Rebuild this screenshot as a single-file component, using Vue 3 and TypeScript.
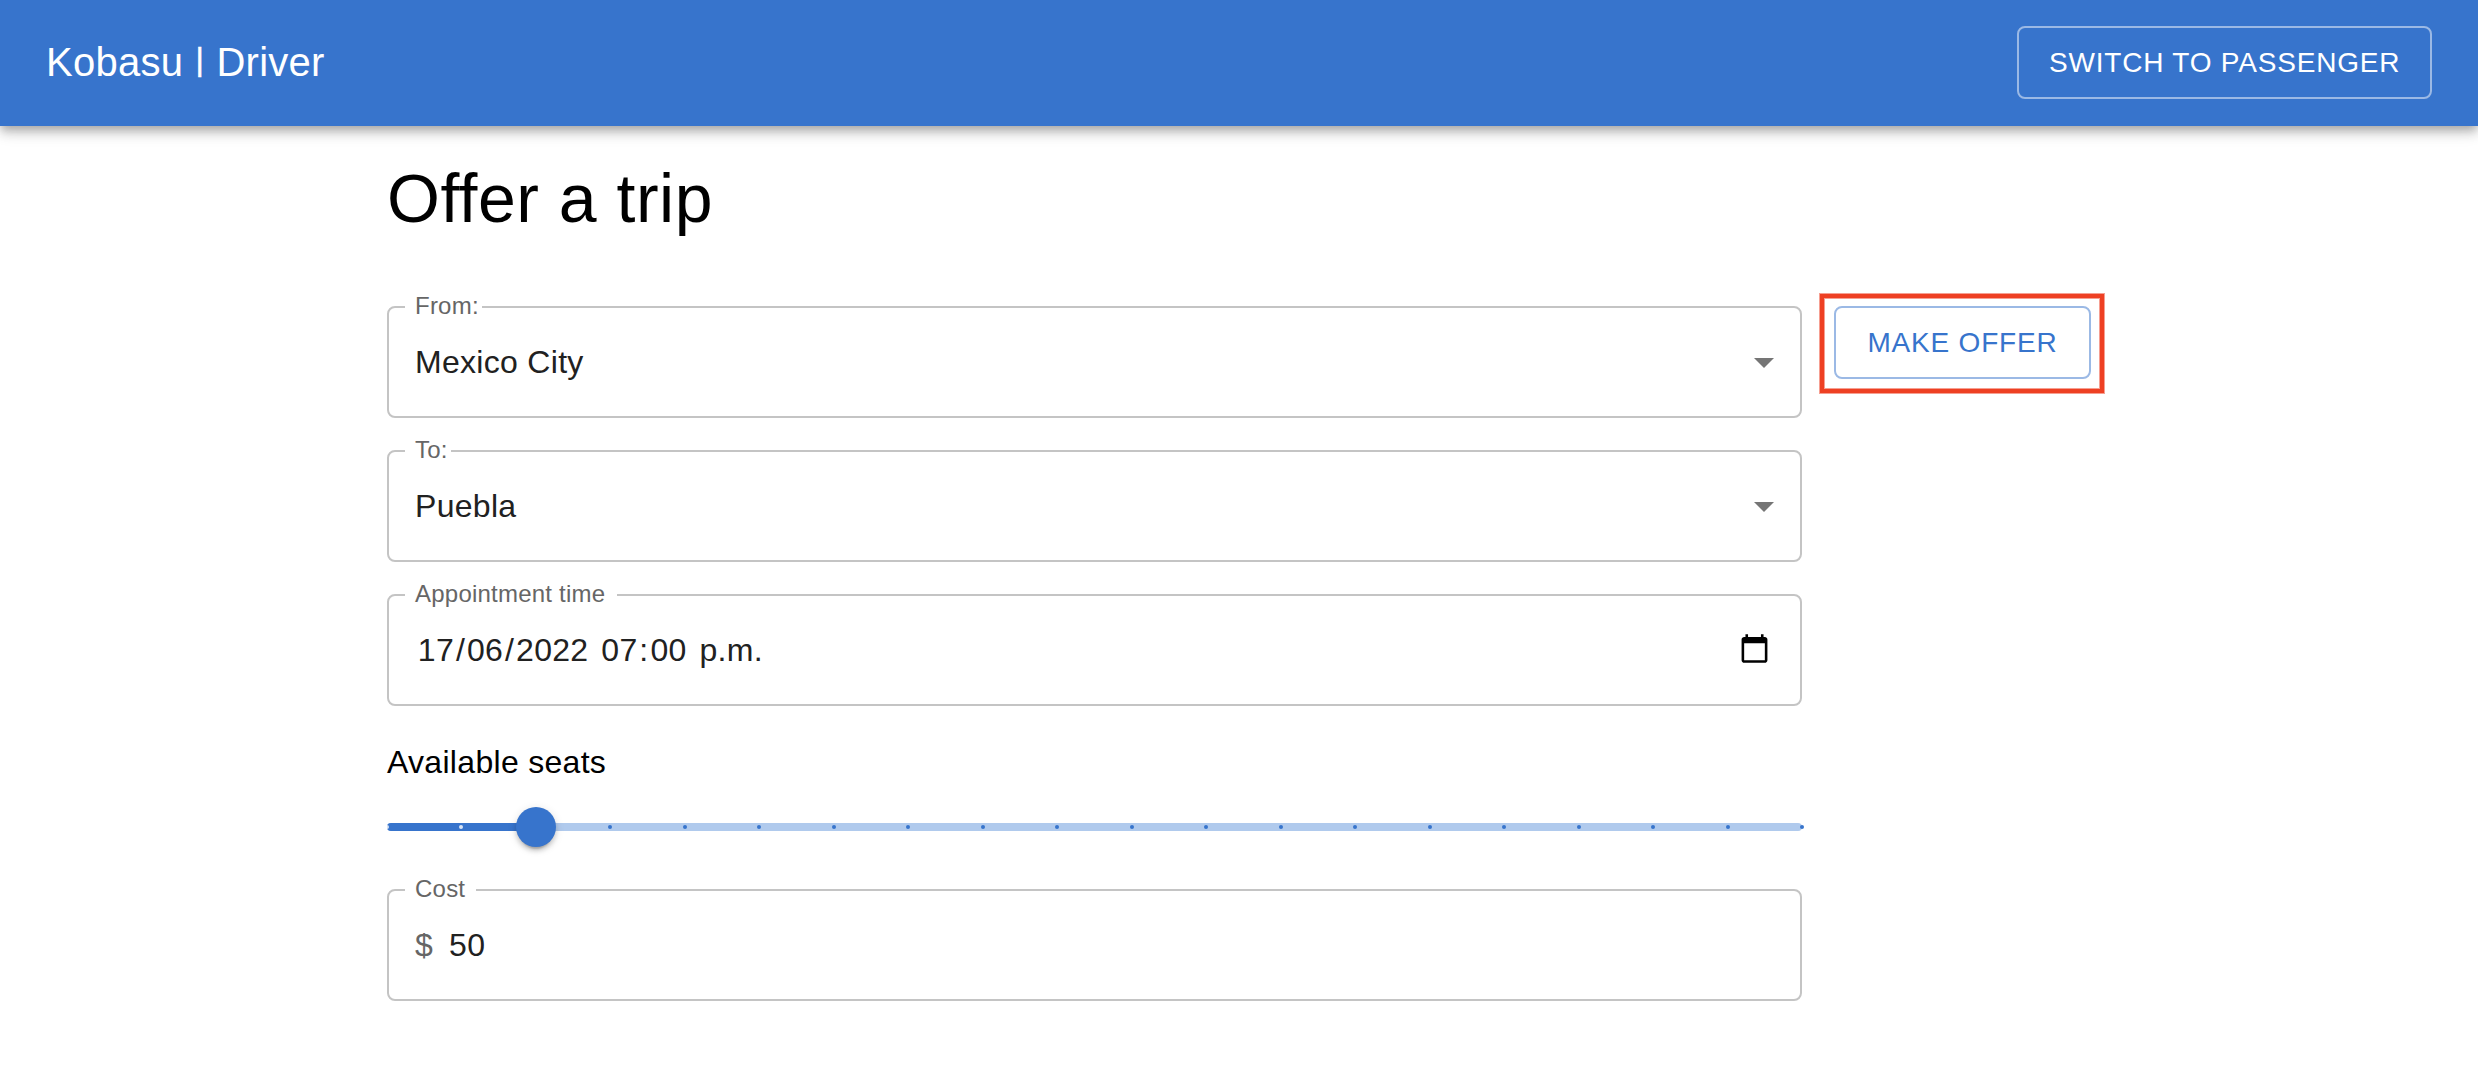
<script setup lang="ts">
interface Field {
  label: string
  notch: number
  value?: string
  kind: 'select' | 'date' | 'money'
}

const routeFields: Field[] = [
  { label: 'From:', notch: 77, value: 'Mexico City', kind: 'select' },
  { label: 'To:', notch: 46, value: 'Puebla', kind: 'select' },
  { label: 'Appointment time', notch: 212, kind: 'date' },
]
const costField: Field = { label: 'Cost', notch: 71, value: '50', kind: 'money' }

const dateParts = ['17', '/', '06', '/', '2022', '\u00a0', '07', ':', '00', '\u00a0', 'p.m.']

const steps = 19
const seatStep = 2
const marks = Array.from({ length: steps + 1 }, (_, i) => i)
const percent = (i: number): string => `${(i / steps) * 100}%`
</script>

<template>
  <div class="page">
    <header class="bar">
      <div class="brand">Kobasu <span class="divider">|</span> Driver</div>
      <button class="btn btn-light">SWITCH TO PASSENGER</button>
    </header>

    <main class="content">
      <h1 class="title">Offer a trip</h1>
      <div class="row">
        <form class="form" @submit.prevent>
          <div v-for="f in routeFields" :key="f.label" class="field">
            <span class="notch" :style="{ width: f.notch + 'px' }"></span>
            <label class="label">{{ f.label }}</label>
            <div v-if="f.kind === 'date'" class="value date">
              <span v-for="(p, i) in dateParts" :key="i" :class="{ part: i % 2 === 0 }">{{ p }}</span>
            </div>
            <div v-else class="value">{{ f.value }}</div>
            <svg v-if="f.kind === 'select'" class="arrow" viewBox="0 0 24 24"><path d="M7 10l5 5 5-5z" /></svg>
            <svg v-else class="calendar" viewBox="0 0 24 24">
              <path d="M20 3h-1V1h-2v2H7V1H5v2H4c-1.1 0-2 .9-2 2v16c0 1.1.9 2 2 2h16c1.1 0 2-.9 2-2V5c0-1.1-.9-2-2-2zm0 18H4V8h16v13z" />
            </svg>
          </div>

          <div class="seats">Available seats</div>
          <div class="slider">
            <span class="track" :style="{ width: percent(seatStep) }"></span>
            <span
              v-for="m in marks"
              :key="m"
              class="mark"
              :class="{ active: m <= seatStep }"
              :style="{ left: percent(m) }"
            ></span>
            <span class="thumb" :style="{ left: percent(seatStep) }"></span>
          </div>

          <div class="field">
            <span class="notch" :style="{ width: costField.notch + 'px' }"></span>
            <label class="label">{{ costField.label }}</label>
            <span class="currency">$</span>
            <div class="value">{{ costField.value }}</div>
          </div>
        </form>

        <div class="action">
          <button class="btn btn-primary">MAKE OFFER</button>
          <span class="highlight"></span>
        </div>
      </div>
    </main>
  </div>
</template>

<style>
body {
  margin: 0;
  background: #fff;
}
</style>

<style scoped>
.page {
  height: 1070px;
  overflow: hidden;
  background: #fff;
  font-family: "Liberation Sans", Helvetica, Arial, sans-serif;
  font-size: 32px;
  letter-spacing: 0.3px;
}
.bar {
  position: relative;
  box-sizing: border-box;
  height: 126px;
  padding: 0 46px 1px;
  display: flex;
  align-items: center;
  justify-content: space-between;
  background: #3774cc;
  color: #fff;
  box-shadow: 0 4px 8px -2px rgba(0, 0, 0, 0.2), 0 8px 10px 0 rgba(0, 0, 0, 0.14), 0 2px 20px 0 rgba(0, 0, 0, 0.12);
}
.brand {
  padding-bottom: 2px;
  font-size: 40px;
  line-height: 64px;
  letter-spacing: 0.25px;
}
.divider {
  display: inline-block;
  margin: 0 1px;
  font-size: 32px;
  line-height: 1;
  vertical-align: 6px;
  -webkit-text-stroke: 0.5px #fff;
}
.btn {
  box-sizing: border-box;
  height: 73px;
  margin: 0;
  padding: 0 30px;
  border: 2px solid;
  border-radius: 8px;
  background: transparent;
  font: 28px/49px "Liberation Sans", Helvetica, Arial, sans-serif;
  letter-spacing: 0.8px;
  white-space: nowrap;
}
.btn-light {
  width: 415px;
  color: #fff;
  border-color: #9bb9e5;
}
.btn-primary {
  display: block;
  width: 257px;
  color: #3774cc;
  border-color: #9bb9e5;
}
.content {
  padding: 30px 0 0 387px;
}
.title {
  margin: 0;
  font-size: 68px;
  font-weight: 400;
  line-height: 84px;
  letter-spacing: 0.5px;
  color: #000;
}
.row {
  display: flex;
  align-items: flex-start;
  gap: 32px;
  margin-top: 66px;
}
.form {
  width: 1415px;
}
.field {
  position: relative;
  box-sizing: border-box;
  height: 112px;
  margin-bottom: 32px;
  padding: 0 12px 0 26px;
  display: flex;
  align-items: center;
  border: 2px solid #c4c4c4;
  border-radius: 8px;
}
.notch {
  position: absolute;
  top: -2px;
  left: 16px;
  height: 2px;
  background: #fff;
}
.label {
  position: absolute;
  top: -19px;
  left: 26px;
  font-size: 24px;
  line-height: 34px;
  letter-spacing: 0.225px;
  color: #666;
  white-space: nowrap;
}
.value {
  flex: 1;
  line-height: 46px;
  color: #212121;
}
.date {
  display: flex;
  padding-left: 1px;
}
.part {
  padding: 0 1.85px;
}
.currency {
  margin-right: 16px;
  color: #666;
}
.arrow {
  width: 48px;
  height: 48px;
  fill: #757575;
}
.calendar {
  width: 31px;
  height: 31px;
  margin: 0 18px 3px 0;
  fill: #000;
}
.seats {
  margin-top: 32px;
  line-height: 48px;
  color: #000;
}
.slider {
  position: relative;
  height: 8px;
  margin: 37px 0 58px;
  border-radius: 8px;
  background: #b0caed;
}
.track {
  display: block;
  height: 8px;
  border-radius: 8px;
  background: #3774cc;
}
.mark {
  position: absolute;
  top: 2px;
  width: 4px;
  height: 4px;
  margin-left: -2px;
  border-radius: 2px;
  background: #3774cc;
}
.mark.active {
  background: #fff;
  opacity: 0.8;
}
.thumb {
  position: absolute;
  top: -16px;
  width: 40px;
  height: 40px;
  margin-left: -20px;
  border-radius: 50%;
  background: #3774cc;
  box-shadow: 0 6px 2px -4px rgba(0, 0, 0, 0.2), 0 4px 4px 0 rgba(0, 0, 0, 0.14), 0 2px 10px 0 rgba(0, 0, 0, 0.12);
}
.action {
  position: relative;
}
.highlight {
  position: absolute;
  inset: -12px -13px -14px -14px;
  border: 4px solid #ee4023;
  box-shadow: 0 0 0 1px rgba(238, 64, 35, 0.5), inset 0 0 0 1px rgba(238, 64, 35, 0.5);
}
</style>
